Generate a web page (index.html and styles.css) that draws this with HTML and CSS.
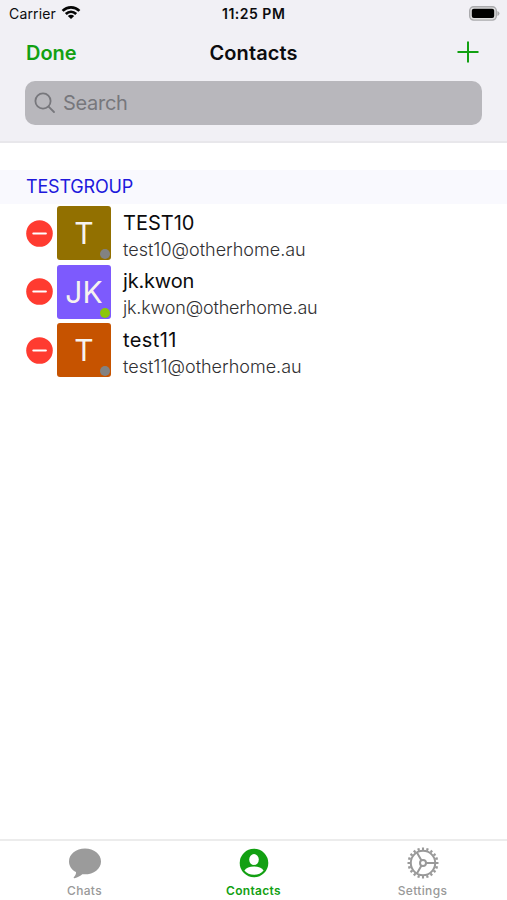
FILE: index.html
```html
<!DOCTYPE html>
<html lang="en">
<head>
<meta charset="utf-8">
<title>Contacts</title>
<link rel="stylesheet" href="styles.css">
</head>
<body>
<div class="app">
  <header class="header">
    <div class="status">
      <div class="status-left"><span class="carrier">Carrier</span>
        <svg class="wifi" viewBox="0 0 20 15" width="20" height="15"><g fill="none" stroke="#050505" stroke-width="2.7"><path d="M1.6 5.9C6.4 1.2 13.6 1.2 18.4 5.9"/><path d="M4.8 9.1C7.9 6.2 12.1 6.2 15.2 9.1"/></g><path d="M10 14L6.8 10.9Q10 8.4 13.2 10.9Z" fill="#050505"/></svg>
      </div>
      <span class="time">11:25 PM</span>
      <svg class="battery" viewBox="0 0 31 15" width="31" height="15"><rect x=".7" y=".7" width="26.6" height="13.4" rx="4" fill="#dededf" stroke="#aaaaad" stroke-width="1.4"/><rect x="2.8" y="2.8" width="22.4" height="9.2" rx="2" fill="#000"/><path d="M28.4 4.9Q30.5 5.5 30.5 7.4T28.4 9.9Z" fill="#aaaaad"/></svg>
    </div>
    <nav class="navbar">
      <span class="done">Done</span>
      <h1 class="title">Contacts</h1>
      <svg class="add" viewBox="0 0 22 22" width="22" height="22"><path d="M11 .5V21.5M.5 11H21.5" stroke="#12a012" stroke-width="2"/></svg>
    </nav>
    <div class="search">
      <svg viewBox="0 0 22 22" width="22" height="22"><g fill="none" stroke="#77777c" stroke-width="1.8" stroke-linecap="round"><circle cx="9" cy="9" r="7.6"/><path d="M14.6 14.6L20 20"/></g></svg>
      <span class="placeholder">Search</span>
    </div>
  </header>
  <main class="list">
    <h2 class="group"><span>TESTGROUP</span></h2>
    <div class="row">
      <svg class="remove" viewBox="0 0 27 27" width="27" height="27"><circle cx="13.5" cy="13.5" r="13.3" fill="#ff3b30"/><path d="M7.3 13.4H19.9" stroke="#fff" stroke-width="2" stroke-linecap="round"/></svg>
      <div class="avatar olive"><span>T</span><i class="presence"></i></div>
      <div class="info"><span class="name">TEST10</span><span class="address">test10@otherhome.au</span></div>
    </div>
    <div class="row">
      <svg class="remove" viewBox="0 0 27 27" width="27" height="27"><circle cx="13.5" cy="13.5" r="13.3" fill="#ff3b30"/><path d="M7.3 13.4H19.9" stroke="#fff" stroke-width="2" stroke-linecap="round"/></svg>
      <div class="avatar violet"><span>JK</span><i class="presence online"></i></div>
      <div class="info tight"><span class="name">jk.kwon</span><span class="address">jk.kwon@otherhome.au</span></div>
    </div>
    <div class="row">
      <svg class="remove" viewBox="0 0 27 27" width="27" height="27"><circle cx="13.5" cy="13.5" r="13.3" fill="#ff3b30"/><path d="M7.3 13.4H19.9" stroke="#fff" stroke-width="2" stroke-linecap="round"/></svg>
      <div class="avatar orange"><span>T</span><i class="presence"></i></div>
      <div class="info loose"><span class="name">test11</span><span class="address">test11@otherhome.au</span></div>
    </div>
  </main>
  <footer class="tabs">
    <div class="tab">
      <svg viewBox="0 0 34 34" width="34" height="34"><path d="M17 2.5C8 2.5 1 8.2 1 15.4C1 20 3.8 23.8 8 26.1C8.2 28.2 7.3 29.8 5.8 31.3C5.3 31.9 5.7 32.4 6.5 32.2C9.8 31.5 12.4 29.8 14.3 28.2C24.7 29.2 33 23.3 33 15.4C33 8.2 26 2.5 17 2.5Z" fill="#9b9b9b"/></svg>
      <span>Chats</span>
    </div>
    <div class="tab active">
      <svg viewBox="0 0 34 34" width="34" height="34"><circle cx="17" cy="17" r="14.3" fill="#12a012"/><ellipse cx="17" cy="13.6" rx="4.8" ry="5.5" fill="#fff"/><path d="M7.4 24.5C9 21.9 12.6 20.5 17 20.5S25 21.9 26.6 24.5C24.5 27.3 21 28.8 17 28.8S9.5 27.3 7.4 24.5Z" fill="#fff"/></svg>
      <span>Contacts</span>
    </div>
    <div class="tab">
      <svg viewBox="0 0 34 34" width="34" height="34"><g fill="none" stroke="#999" stroke-width="2"><circle cx="17" cy="17" r="12.2"/><circle cx="17" cy="17" r="14.2" stroke-width="2.6" pathLength="200" stroke-dasharray="4.8 5.2" stroke-dashoffset="2.4"/><circle cx="17" cy="17" r="3"/><path d="M20 17H29M15.5 14.4L10.9 6.4M15.5 19.6L10.9 27.6"/></g></svg>
      <span>Settings</span>
    </div>
  </footer>
</div>
</body>
</html>
```
FILE: styles.css
```css
* { box-sizing: border-box; }
body { margin: 0; background: #fff; font-family: Inter, "Liberation Sans", sans-serif; color: #0c0c0e; }
.app { width: 507px; height: 900px; display: flex; flex-direction: column; overflow: hidden; }
svg { display: block; flex: none; }
span { white-space: nowrap; }
.header { height: 143px; flex: none; background: #f1f0f5; border-bottom: 2px solid #e8e7eb; }
.status { height: 27px; display: grid; grid-template-columns: 1fr auto 1fr; align-items: center; padding: 0 7px 0 9px; }
.status-left { display: flex; align-items: center; gap: 6px; }
.carrier { width: 47px; font-size: 14px; line-height: 20px; letter-spacing: .15px; }
.wifi { margin: -2px 0 0 -1px; }
.time { width: 65px; font-size: 14px; font-weight: 600; line-height: 20px; letter-spacing: .5px; }
.battery { justify-self: end; }
.navbar { height: 53px; display: grid; grid-template-columns: 1fr auto 1fr; align-items: center; padding: 0 28px 2px 27px; }
.done { margin-left: -1px; color: #12a012; font-size: 20px; font-weight: 600; line-height: 24px; }
.title { margin: 0; width: 87px; font-size: 20px; font-weight: 600; line-height: 24px; letter-spacing: .1px; white-space: nowrap; }
.add { justify-self: end; margin-bottom: 2px; }
.search { height: 44px; margin: .5px 25px 0; padding-left: 9px; display: flex; align-items: center; gap: 7px; background: #b8b7bc; border-radius: 10px; color: #77777c; }
.placeholder { font-size: 20px; line-height: 24px; letter-spacing: -.3px; }
.list { flex: 1; padding-top: 27px; }
.group { margin: 0; height: 34px; padding-left: 26px; background: #f9f9fe; color: #2018dc; font-size: 18px; font-weight: 400; line-height: 34px; letter-spacing: -.2px; }
.row { height: 58.6px; display: flex; align-items: center; padding-left: 26px; }
.avatar { position: relative; width: 54px; height: 54px; margin-left: 4px; border-radius: 3px; display: flex; align-items: center; justify-content: center; color: #f6f3ef; font-size: 30px; line-height: 54px; }
.olive { background: #927000; }
.violet { background: #7d5afd; }
.orange { background: #c65300; }
.presence { position: absolute; right: 1px; bottom: 1px; width: 10px; height: 10px; border-radius: 50%; background: #828282; }
.online { background: #8cc60a; }
.info { margin-left: 12px; padding-top: 6px; display: flex; flex-direction: column; }
.tight { letter-spacing: -.18px; }
.loose .name { letter-spacing: .4px; }
.name { font-size: 20px; line-height: 27px; }
.address { font-size: 18px; line-height: 26px; color: #303032; font-weight: 300; }
.tabs { height: 61px; flex: none; display: grid; grid-template-columns: repeat(3, 1fr); border-top: 2px solid #ececec; }
.tab { display: flex; flex-direction: column; align-items: center; padding-top: 5px; color: #999; font-size: 12px; font-weight: 500; line-height: 16px; letter-spacing: .35px; }
.tab span { margin-top: 3px; }
.active { color: #12a012; font-weight: 600; letter-spacing: .3px; }
```
